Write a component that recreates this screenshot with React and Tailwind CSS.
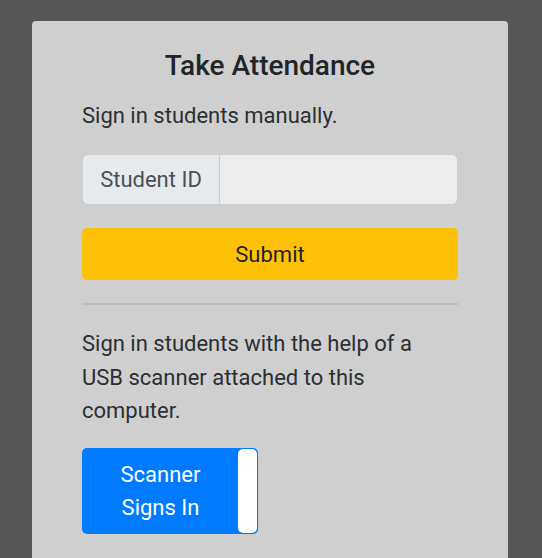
import React, { useState } from 'react';

const App = () => {
  const [studentId, setStudentId] = useState('');
  const [scannerOn, setScannerOn] = useState(true);

  return (
    <div className="min-h-screen bg-[#565656] px-[32px] pt-[21px]" style={{ fontFamily: 'Roboto, "Noto Sans", sans-serif' }}>
      <div className="w-[476px] min-h-[560px] rounded-[4px] bg-[#cfcfcf] px-[50px] pt-[28px] text-[#212529]">
        <h2 className="text-center text-[28px] font-medium leading-[33px]">Take Attendance</h2>
        <p className="mt-[17px] text-[22px] leading-[33px] text-[#2b2f33]">Sign in students manually.</p>

        <form className="mt-[22px]" onSubmit={(e) => e.preventDefault()}>
          <div className="flex h-[51px] rounded-[5px] border border-[#c9cdd1]">
            <span className="flex w-[137px] items-center justify-center rounded-l-[5px] border-r border-[#c9cdd1] bg-[#e7eaed] text-[22px] text-[#495057]">
              Student ID
            </span>
            <input
              name="studentId"
              value={studentId}
              onChange={(e) => setStudentId(e.target.value)}
              className="min-w-0 flex-1 rounded-r-[5px] bg-[#ececec] px-3 text-[22px] outline-none"
            />
          </div>
          <button type="submit" className="mt-[23px] h-[52px] w-full rounded-[5px] bg-[#ffc107] text-[22px] text-[#212529]">
            Submit
          </button>
        </form>

        <hr className="mt-[23px] border-t-2 border-[#bdbdbd]" />

        <p className="mt-[22px] text-[22px] leading-[33.5px] text-[#2b2f33]">
          Sign in students with the help of a USB scanner attached to this computer.
        </p>

        <button
          type="button"
          onClick={() => setScannerOn(!scannerOn)}
          className="mt-[20px] flex h-[86px] w-[176px] items-stretch rounded-[5px] bg-[#007bff] p-[1px]"
        >
          <span className="flex flex-1 items-center justify-center text-[22px] leading-[33px] text-white">
            Scanner<br />Signs In
          </span>
          <span className="w-[19px] rounded-[5px] bg-white" />
        </button>
      </div>
    </div>
  );
};

export default App;
